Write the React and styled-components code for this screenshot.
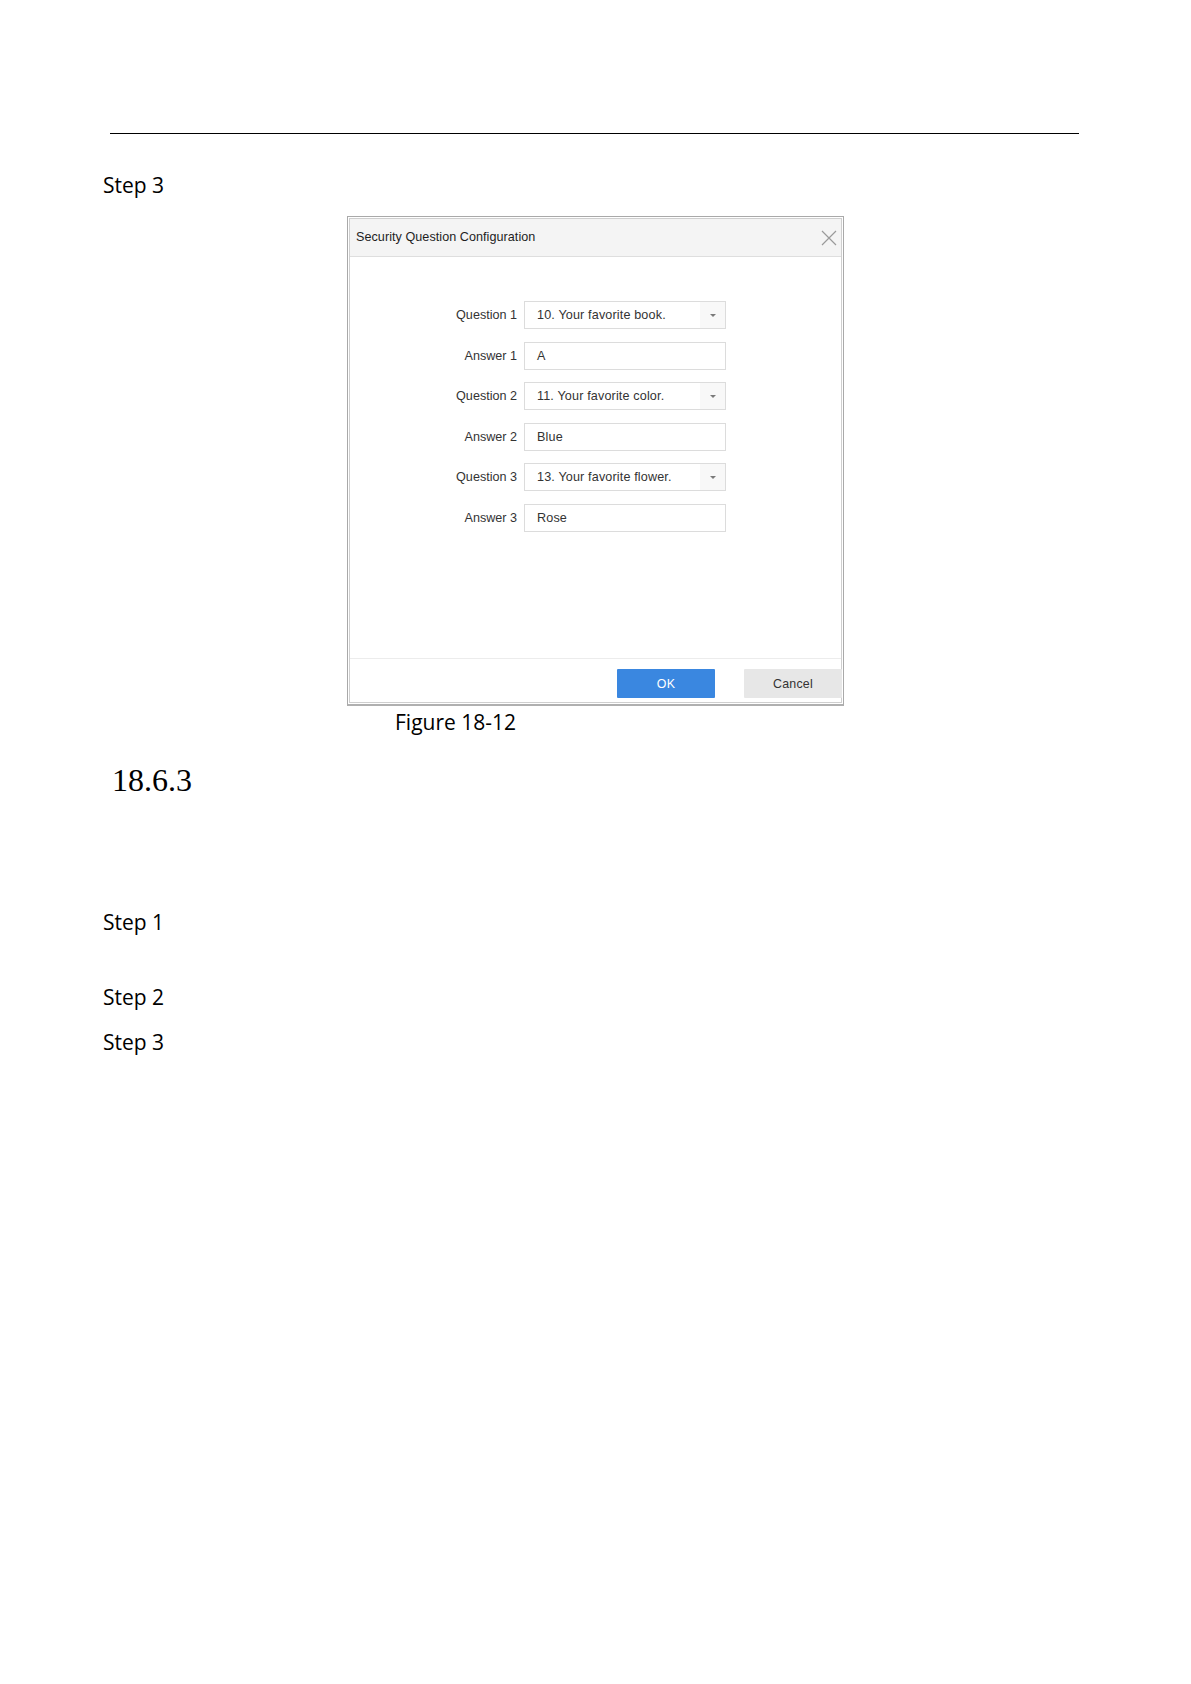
import React from "react";
import styled, { createGlobalStyle } from "styled-components";

const GlobalStyle = createGlobalStyle`
  html, body {
    margin: 0;
    padding: 0;
    background: #ffffff;
  }
  * {
    box-sizing: border-box;
  }
`;

const Page = styled.div`
  width: 1191px;
  min-height: 1684px;
  background: #ffffff;
  padding-top: 133px;
  font-family: "Open Sans", "Liberation Sans", sans-serif;
  color: #000;
`;

const Rule = styled.div`
  margin-left: 110px;
  width: 969px;
  border-top: 1px solid #000;
`;

const Step = styled.div`
  font-size: 21px;
  line-height: 28px;
  padding-left: 103px;
  margin-top: ${({ $top }) => $top}px;
`;

const Caption = styled.div`
  font-size: 21px;
  line-height: 28px;
  padding-left: 395px;
  margin-top: 2px;
`;

const SectionNumber = styled.h3`
  margin: 24px 0 0;
  padding-left: 112px;
  font-family: "Liberation Serif", "Times New Roman", serif;
  font-weight: 400;
  font-size: 32px;
  line-height: 40px;
`;

/* ================= DIALOG ================= */

const Frame = styled.div`
  margin: 17px 0 0 347px;
  width: 497px;
  border: 1px solid #a9a9a9;
  border-bottom: 2px solid #b0b0b0;
  padding: 1px;
  background: #fff;
`;

const Dialog = styled.div`
  border: 1px solid #cfcfcf;
  font-family: "Liberation Sans", Arial, sans-serif;
  color: #333;
`;

const Header = styled.div`
  height: 38px;
  display: flex;
  align-items: center;
  justify-content: space-between;
  padding: 0 4px 0 6px;
  background: #f4f4f4;
  border-bottom: 1px solid #dedede;
`;

const Title = styled.div`
  font-size: 12.6px;
  letter-spacing: 0.05px;
  line-height: 37px;
  color: #1e1e1e;
`;

const Body = styled.div`
  height: 401px;
  padding-top: 44px;
`;

const Form = styled.div`
  display: grid;
  grid-template-columns: 167px 202px;
  column-gap: 7px;
  row-gap: 12.6px;
`;

const Label = styled.div`
  text-align: right;
  font-size: 12.6px;
  line-height: 28px;
  color: #333;
`;

const Field = styled.div`
  height: 28px;
  display: flex;
  align-items: center;
  border: 1px solid #dcdcdc;
  background: #fff;
  font-size: 12.6px;
  letter-spacing: 0.15px;
  color: #333;
`;

const FieldText = styled.div`
  flex: 1;
  padding-left: 12px;
  line-height: 26px;
  white-space: nowrap;
`;

const Arrow = styled.div`
  width: 25px;
  height: 100%;
  display: flex;
  align-items: center;
  justify-content: center;
  background: #f8f8f8;

  &::after {
    content: "";
    border-left: 3px solid transparent;
    border-right: 3px solid transparent;
    border-top: 3px solid #7a7a7a;
  }
`;

const Footer = styled.div`
  display: flex;
  justify-content: flex-end;
  gap: 29px;
  padding: 10px 0 4px;
  border-top: 1px solid #ececec;
`;

const Button = styled.div`
  width: 98px;
  height: 29px;
  display: flex;
  align-items: center;
  justify-content: center;
  font-size: 12.4px;
  letter-spacing: 0.2px;
  border-radius: 1px;
  background: ${({ $primary }) => ($primary ? "#3a87e0" : "#e7e7e7")};
  color: ${({ $primary }) => ($primary ? "#ffffff" : "#333333")};
  margin-right: ${({ $primary }) => ($primary ? 0 : -1)}px;
`;

const CloseIcon = () => (
  <svg width="16" height="16" viewBox="0 0 16 16">
    <path d="M1 1 L15 15 M15 1 L1 15" stroke="#9a9a9a" strokeWidth="1.2" fill="none" />
  </svg>
);

const rows = [
  { label: "Question 1", value: "10. Your favorite book.", select: true },
  { label: "Answer 1", value: "A" },
  { label: "Question 2", value: "11. Your favorite color.", select: true },
  { label: "Answer 2", value: "Blue" },
  { label: "Question 3", value: "13. Your favorite flower.", select: true },
  { label: "Answer 3", value: "Rose" },
];

const SecurityDialog = () => (
  <Frame>
    <Dialog>
      <Header>
        <Title>Security Question Configuration</Title>
        <CloseIcon />
      </Header>
      <Body>
        <Form>
          {rows.map((row) => (
            <React.Fragment key={row.label}>
              <Label>{row.label}</Label>
              <Field>
                <FieldText>{row.value}</FieldText>
                {row.select && <Arrow />}
              </Field>
            </React.Fragment>
          ))}
        </Form>
      </Body>
      <Footer>
        <Button $primary>OK</Button>
        <Button>Cancel</Button>
      </Footer>
    </Dialog>
  </Frame>
);

const App = () => (
  <Page>
    <GlobalStyle />
    <Rule />
    <Step $top={37}>Step 3</Step>
    <SecurityDialog />
    <Caption>Figure 18-12</Caption>
    <SectionNumber>18.6.3</SectionNumber>
    <Step $top={108}>Step 1</Step>
    <Step $top={47}>Step 2</Step>
    <Step $top={17}>Step 3</Step>
  </Page>
);

export default App;
